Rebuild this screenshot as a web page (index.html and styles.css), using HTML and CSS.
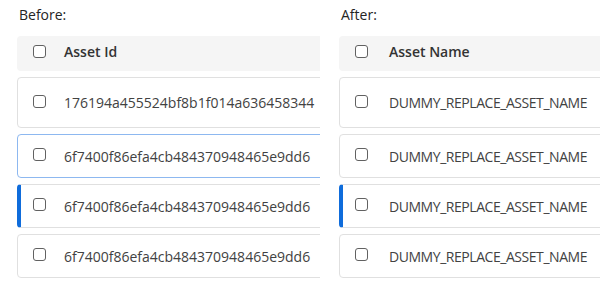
FILE: index.html
```html
<!DOCTYPE html>
<html>
<head>
<meta charset="utf-8">
<link rel="stylesheet" href="styles.css">
</head>
<body>
<div class="compare">
  <section class="col col-before">
    <div class="label">Before:</div>
    <div class="panel panel-before">
      <div class="head"><span class="cb"></span><span class="cell">Asset Id</span></div>
      <div class="row row-first"><span class="cb"></span><span class="cell">176194a455524bf8b1f014a636458344</span></div>
      <div class="row row-hover"><span class="cb"></span><span class="cell">6f7400f86efa4cb484370948465e9dd6</span></div>
      <div class="row row-selected"><span class="cb"></span><span class="cell">6f7400f86efa4cb484370948465e9dd6</span></div>
      <div class="row"><span class="cb"></span><span class="cell">6f7400f86efa4cb484370948465e9dd6</span></div>
    </div>
  </section>
  <section class="col col-after">
    <div class="label">After:</div>
    <div class="panel panel-after">
      <div class="head"><span class="cb"></span><span class="cell">Asset Name</span></div>
      <div class="row row-first"><span class="cb"></span><span class="cell">DUMMY_REPLACE_ASSET_NAME</span></div>
      <div class="row"><span class="cb"></span><span class="cell">DUMMY_REPLACE_ASSET_NAME</span></div>
      <div class="row row-selected"><span class="cb"></span><span class="cell">DUMMY_REPLACE_ASSET_NAME</span></div>
      <div class="row"><span class="cb"></span><span class="cell">DUMMY_REPLACE_ASSET_NAME</span></div>
    </div>
  </section>
</div>
</body>
</html>
```

FILE: styles.css
```css
* { box-sizing: border-box; }
html, body { margin: 0; padding: 0; background: #fff; }
body {
  font-family: "Open Sans", "Noto Sans", sans-serif;
  color: #242424;
  width: 616px;
  height: 288px;
  overflow: hidden;
}
.compare {
  display: flex;
  align-items: flex-start;
}
.col {
  overflow: hidden;
  padding-top: 5px;
  padding-left: 17px;
}
.col-before { width: 320px; }
.col-after { width: 278px; margin-left: 2px; }
.label {
  font-size: 14px;
  line-height: 20px;
  padding-left: 2px;
  color: #242424;
}
.panel {
  width: 420px;
  margin-top: 11px;
  display: flex;
  flex-direction: column;
  gap: 6px;
}
.head {
  height: 35px;
  background: #f5f5f5;
  border-radius: 4px;
  display: flex;
  align-items: center;
  padding-left: 16px;
  padding-bottom: 4px;
  font-size: 14px;
  font-weight: 600;
  color: #333;
}
.row {
  height: 44px;
  background: #fff;
  border: 1px solid #e0e0e0;
  border-radius: 4px;
  display: flex;
  align-items: center;
  padding-left: 15px;
  font-size: 14px;
  color: #424242;
}
.row-first { height: 51px; }
.row-hover { border-color: #8db8f0; }
.row-selected {
  border-left: 4px solid #0f6cdb;
  padding-left: 12px;
}
.cb {
  flex: none;
  width: 13px;
  height: 13px;
  border: 1px solid #616161;
  border-radius: 3px;
  background: #fff;
  margin-bottom: 3px;
}
.head .cb { margin-bottom: 0; }
.panel-before .cell { margin-left: 18px; }
.panel-after .cell { margin-left: 21px; }
.panel-after .row .cell { letter-spacing: -0.45px; }
.cell { white-space: nowrap; }
```
